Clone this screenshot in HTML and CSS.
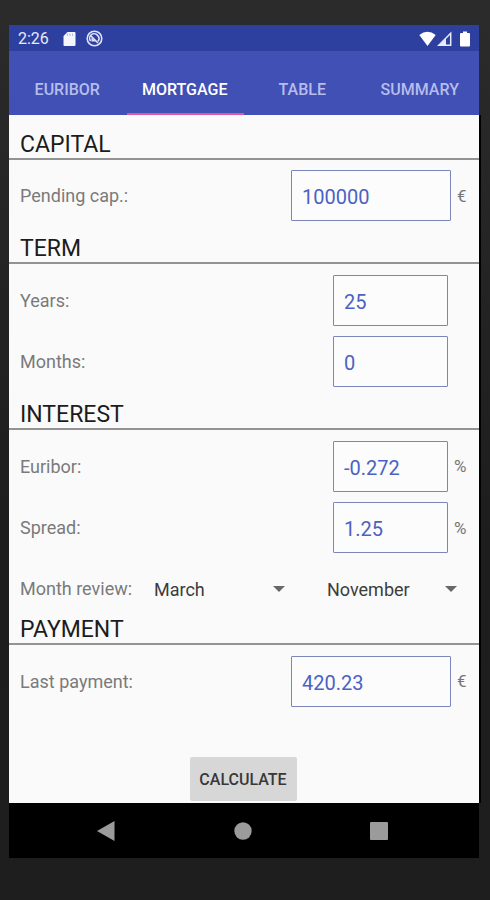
FILE: index.html
```html
<!DOCTYPE html>
<html lang="en">
  <head>
    <meta charset="UTF-8">
    <meta name="viewport" content="width=device-width, initial-scale=1.0">
    <title>Mortgage</title>
    <link rel="stylesheet" href="styles.css">
  </head>
  <body>
    <div class="screen">
      <!-- Status bar -->
      <div class="status-bar">
        <span class="clock">2:26</span>
        <svg class="icon-sd" width="13" height="16" viewBox="0 0 13 16">
          <path d="M4.5 1H11.500Q12.500 1 12.500 2V14Q12.500 15 11.500 15H1.500Q.5 15 .5 14V5Z" fill="#f4f5fd"/>
          <path d="M4.500 2.500V5M7 2.500V5M9.500 2.500V5" stroke="#b4bce8" stroke-width="1"/>
        </svg>
        <svg class="icon-sync" width="17" height="17" viewBox="0 0 17 17" fill="none" stroke="#dfe3f8">
          <circle cx="8.500" cy="8.500" r="7.300" stroke-width="1.600"/>
          <path d="M4.700 11A4.400 4.400 0 0 1 11.500 5.300A4.400 4.400 0 0 1 12 11.200M4.500 5.500L12 13" stroke-width="1.600"/>
          <path d="M5.500 7.500L10 11.500H5.500Z" fill="#dfe3f8" stroke="none"/>
        </svg>
        <div class="status-right">
          <svg width="17" height="16" viewBox="0 0 17 16">
            <path d="M.3 4Q8.500-2.500 16.700 4L8.500 15Z" fill="#fff"/>
          </svg>
          <svg width="15" height="16" viewBox="0 0 15 16">
            <path d="M1.800 14.200L13.700 2.200V14.200Z" fill="none" stroke="#e8ebfb" stroke-width="1.500"/>
            <path d="M2 14.500L9 7.500V14.500Z" fill="#e8ebfb"/>
          </svg>
          <svg class="icon-battery" width="10" height="16" viewBox="0 0 10 16">
            <path d="M3 .5H7V2H9Q10 2 10 3V14.500Q10 15.500 9 15.500H1Q0 15.500 0 14.500V3Q0 2 1 2H3Z" fill="#fff"/>
          </svg>
        </div>
      </div>

      <!-- Tabs -->
      <div class="tabs">
        <div class="tab">EURIBOR</div>
        <div class="tab active">MORTGAGE</div>
        <div class="tab">TABLE</div>
        <div class="tab">SUMMARY</div>
      </div>

      <!-- Form -->
      <div class="content">
        <h2>CAPITAL</h2>
        <div class="section">
          <div class="row">
            <label for="capital">Pending cap.:</label>
            <input type="text" id="capital" class="wide" value="100000">
            <span class="unit euro">€</span>
          </div>
        </div>

        <h2>TERM</h2>
        <div class="section">
          <div class="row">
            <label for="years">Years:</label>
            <input type="text" id="years" value="25">
            <span class="unit"></span>
          </div>
          <div class="row">
            <label for="months">Months:</label>
            <input type="text" id="months" value="0">
            <span class="unit"></span>
          </div>
        </div>

        <h2>INTEREST</h2>
        <div class="section">
          <div class="row">
            <label for="euribor">Euribor:</label>
            <input type="text" id="euribor" value="-0.272">
            <span class="unit">%</span>
          </div>
          <div class="row">
            <label for="spread">Spread:</label>
            <input type="text" id="spread" value="1.25">
            <span class="unit">%</span>
          </div>
          <div class="row review">
            <label>Month review:</label>
            <div class="spinner first">
              <span>March</span>
              <svg width="12" height="6" viewBox="0 0 12 6"><path d="M0 0H12L6 6Z" fill="#686868"/></svg>
            </div>
            <div class="spinner">
              <span>November</span>
              <svg width="12" height="6" viewBox="0 0 12 6"><path d="M0 0H12L6 6Z" fill="#686868"/></svg>
            </div>
          </div>
        </div>

        <h2>PAYMENT</h2>
        <div class="section">
          <div class="row">
            <label for="payment">Last payment:</label>
            <input type="text" id="payment" class="wide" value="420.23">
            <span class="unit euro">€</span>
          </div>
        </div>

        <button class="calculate">CALCULATE</button>
      </div>

      <!-- Navigation bar -->
      <div class="nav-bar">
        <svg width="18" height="20" viewBox="0 0 18 20"><path d="M0 10L17.500 0V20Z" fill="#9b9b9b"/></svg>
        <svg width="18" height="18" viewBox="0 0 18 18"><circle cx="9" cy="9" r="8.700" fill="#9b9b9b"/></svg>
        <svg width="18" height="18" viewBox="0 0 18 18"><rect width="18" height="18" rx="1" fill="#9b9b9b"/></svg>
      </div>
    </div>
  </body>
</html>
```
FILE: styles.css
```css
* {
  box-sizing: border-box;
}

body {
  margin: 0;
  height: 900px;
  padding: 25px 11px 0 9px;
  background: linear-gradient(#2b2b2b, #1d1d1d 60%, #1e1e1f);
  font-family: Roboto, sans-serif;
  overflow: hidden;
}

.screen {
  display: flex;
  flex-direction: column;
  width: 470px;
  height: 833px;
}

/* Status bar */
.status-bar {
  display: flex;
  align-items: center;
  height: 26px;
  padding: 1px 9px 0 9px;
  background-color: #2e409f;
  color: #e6e9fa;
}

.clock {
  width: 45px;
  font-size: 16px;
}

.icon-sync {
  margin-left: 10px;
}

.status-right {
  display: flex;
  align-items: center;
  gap: 1px;
  margin-left: auto;
}

.icon-battery {
  margin-left: 7px;
}

/* Tabs */
.tabs {
  display: flex;
  height: 64px;
  background-color: #4050b5;
}

.tab {
  display: flex;
  flex: 1;
  align-items: center;
  justify-content: center;
  padding: 14px 1px 0 0;
  border-bottom: 2px solid transparent;
  color: #b6bdec;
  font-size: 16px;
  font-weight: 500;
}

.tab.active {
  border-bottom-color: #e0569f;
  color: #fff;
}

/* Form */
.content {
  display: flex;
  flex: 1;
  flex-direction: column;
  padding-top: 6.5px;
  background-color: #fafafa;
  box-shadow: 2px 0 0 #000;
}

h2 {
  height: 38px;
  margin: 0;
  padding: 8px 11px 0 11px;
  border-bottom: 2px solid #939393;
  color: #1c1c1c;
  font-size: 23px;
  font-weight: 400;
  line-height: 30px;
}

.section {
  padding: 5.5px 0 0 11px;
}

.row {
  display: flex;
  align-items: center;
  height: 61.25px;
}

label {
  margin-right: auto;
  color: #7a7a7a;
  font-size: 18px;
}

input {
  width: 115px;
  height: 51px;
  padding: 3px 0 0 10px;
  border: 1.5px solid #7d86b8;
  border-radius: 1px;
  background-color: #fcfcfc;
  color: #4a62c4;
  font-family: Roboto, sans-serif;
  font-size: 20px;
}

input.wide {
  width: 160px;
}

.unit {
  width: 31px;
  padding-left: 6px;
  color: #777;
  font-size: 17px;
}

.unit.euro {
  width: 28px;
}

.review {
  height: 49px;
  padding-top: 11px;
}

.review label {
  width: 134px;
  margin-right: 0;
}

.spinner {
  display: flex;
  align-items: center;
  justify-content: space-between;
  width: 130px;
  padding-top: 2px;
  color: #3c3c3c;
  font-size: 18px;
}

.spinner.first {
  width: 131px;
  margin-right: 42px;
}

.calculate {
  align-self: center;
  width: 107px;
  height: 44px;
  margin: 45px 2px 0 0;
  padding: 0;
  border: none;
  border-radius: 2px;
  background-color: #d7d7d7;
  color: #383838;
  font-family: Roboto, sans-serif;
  font-size: 16px;
  font-weight: 500;
}

/* Navigation bar */
.nav-bar {
  display: flex;
  align-items: center;
  justify-content: space-between;
  height: 55px;
  padding: 0 91px 0 88px;
  background-color: #000;
}
```
